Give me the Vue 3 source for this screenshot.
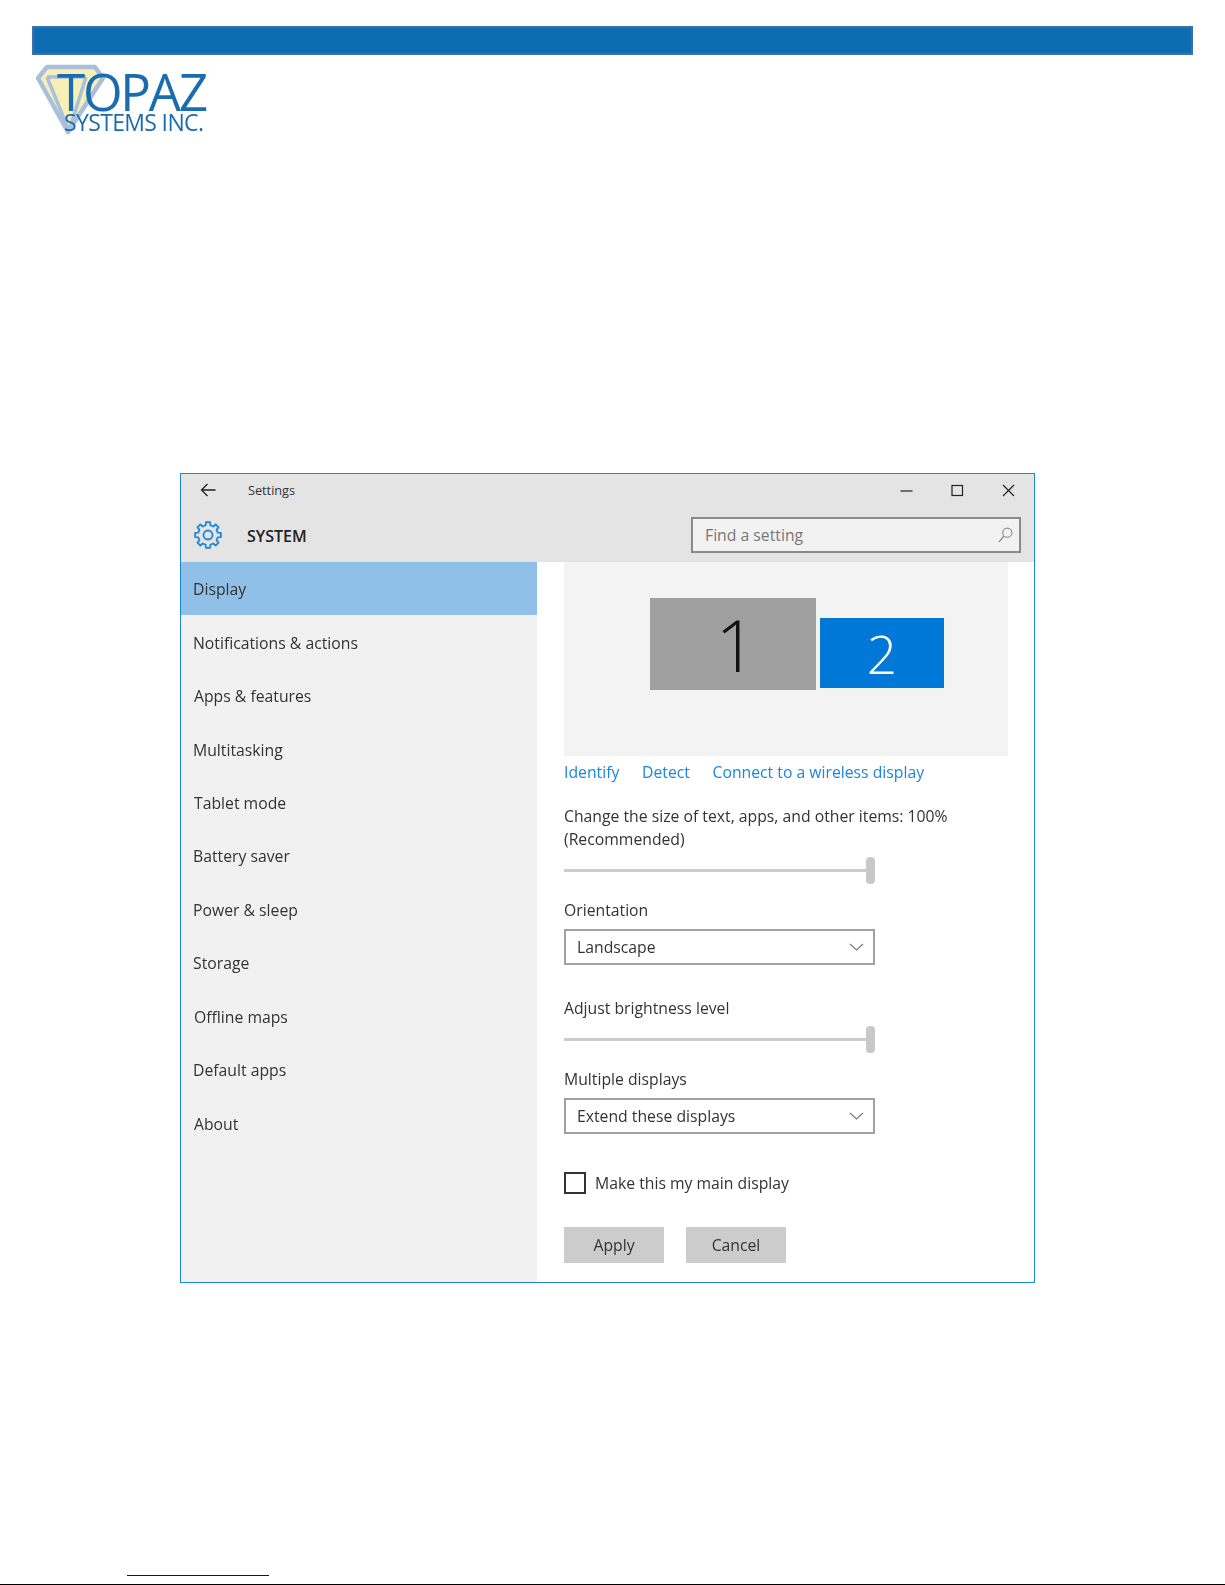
<script setup>
const navItems = [
  { label: 'Display', active: true },
  { label: 'Notifications & actions' },
  { label: 'Apps & features', inset: true },
  { label: 'Multitasking' },
  { label: 'Tablet mode', inset: true },
  { label: 'Battery saver' },
  { label: 'Power & sleep' },
  { label: 'Storage' },
  { label: 'Offline maps', inset: true },
  { label: 'Default apps' },
  { label: 'About', inset: true }
]

function gearPath(cx, cy, outer, inner, teeth) {
  const pts = []
  const step = (Math.PI * 2) / teeth
  for (let i = 0; i < teeth; i++) {
    const a = i * step - Math.PI / 2
    const w = step * 0.2
    const w2 = step * 0.3
    const p = (r, t) => `${(cx + r * Math.cos(t)).toFixed(2)} ${(cy + r * Math.sin(t)).toFixed(2)}`
    pts.push(p(inner, a - w2), p(outer, a - w), p(outer, a + w), p(inner, a + w2))
  }
  return 'M' + pts.join('L') + 'Z'
}
const gear = gearPath(14, 14, 13, 10, 8)
</script>

<template>
  <div class="page">
    <div class="topbar"></div>

    <div class="logo">
      <svg class="gem" width="72" height="72" viewBox="0 0 72 72">
        <path d="M11 3H59L67 14L32 68L2 14Z" fill="#f8efb8" stroke="#a9c0dd" stroke-width="4.5" stroke-linejoin="round" />
        <path d="M11 13H50M11 13L33 67M50 13L33 67" fill="none" stroke="#a9c0dd" stroke-width="3.5" />
      </svg>
      <div class="logo-name">TOPAZ</div>
      <div class="logo-sub">SYSTEMS INC.</div>
    </div>

    <section class="window">
      <header class="win-head">
        <div class="title-row">
          <svg class="back" width="16" height="14" viewBox="0 0 16 14">
            <path d="M15.5 7H1.5M7.5 1L1.5 7L7.5 13" fill="none" stroke="#222" stroke-width="1.3" />
          </svg>
          <span class="title">Settings</span>
          <div class="controls">
            <svg width="13" height="13" viewBox="0 0 13 13"><path d="M0.5 7H12.5" stroke="#222" stroke-width="1.2" /></svg>
            <svg width="13" height="13" viewBox="0 0 13 13"><rect x="1" y="1.5" width="10.5" height="10" fill="none" stroke="#222" stroke-width="1.2" /></svg>
            <svg width="13" height="13" viewBox="0 0 13 13"><path d="M1 1L12 12M12 1L1 12" stroke="#222" stroke-width="1.2" /></svg>
          </div>
        </div>
        <div class="system-row">
          <svg class="gear" width="28" height="28" viewBox="0 0 28 28">
            <path :d="gear" fill="none" stroke="#1a86d8" stroke-width="1.8" stroke-linejoin="round" />
            <circle cx="14" cy="14" r="4.5" fill="none" stroke="#1a86d8" stroke-width="1.8" />
          </svg>
          <span class="system">SYSTEM</span>
          <div class="search">
            <span>Find a setting</span>
            <svg width="15" height="16" viewBox="0 0 15 16">
              <circle cx="9.3" cy="5.7" r="4.6" fill="none" stroke="#8c8c8c" stroke-width="1.1" />
              <path d="M6 9L1 15" stroke="#8c8c8c" stroke-width="1.2" />
            </svg>
          </div>
        </div>
      </header>

      <div class="win-body">
        <nav class="sidebar">
          <div v-for="item in navItems" :key="item.label" class="nav-item" :class="{ active: item.active, inset: item.inset }">{{ item.label }}</div>
        </nav>

        <main class="content">
          <div class="preview">
            <div class="monitor one">1</div>
            <div class="monitor two">2</div>
          </div>

          <div class="links">
            <span>Identify</span>
            <span>Detect</span>
            <span>Connect to a wireless display</span>
          </div>

          <p class="size-text">Change the size of text, apps, and other items: 100%<br />(Recommended)</p>
          <div class="slider"><i></i></div>

          <div class="label orientation">Orientation</div>
          <div class="select">
            <span>Landscape</span>
            <svg width="15" height="8" viewBox="0 0 15 8"><path d="M1 1L7.5 7L14 1" fill="none" stroke="#777" stroke-width="1.1" /></svg>
          </div>

          <div class="label brightness">Adjust brightness level</div>
          <div class="slider"><i></i></div>

          <div class="label orientation">Multiple displays</div>
          <div class="select">
            <span>Extend these displays</span>
            <svg width="15" height="8" viewBox="0 0 15 8"><path d="M1 1L7.5 7L14 1" fill="none" stroke="#777" stroke-width="1.1" /></svg>
          </div>

          <div class="check-row">
            <span class="box"></span>
            <span>Make this my main display</span>
          </div>

          <div class="buttons">
            <button type="button">Apply</button>
            <button type="button">Cancel</button>
          </div>
        </main>
      </div>
    </section>

    <footer class="foot">
      <div class="foot-link"></div>
      <div class="foot-rule"></div>
    </footer>
  </div>
</template>

<style scoped>
.page {
  position: relative;
  height: 1585px;
  overflow: hidden;
  background: #fff;
  display: flex;
  flex-direction: column;
  font-family: "Open Sans", "Liberation Sans", sans-serif;
  color: #333;
}
.topbar {
  margin: 26px 32px 0;
  height: 29px;
  box-sizing: border-box;
  background: #0e6cb3;
  border: 2px solid #3f70a3;
}
.logo {
  position: relative;
  height: 418px;
  margin-left: 34px;
  flex: none;
  filter: blur(0.4px);
}
.gem {
  position: absolute;
  left: 2px;
  top: 9px;
}
.logo-name {
  position: absolute;
  left: 23px;
  top: 17px;
  font-size: 51px;
  line-height: 38px;
  letter-spacing: -2.2px;
  color: #1a6cae;
}
.logo-sub {
  position: absolute;
  left: 30px;
  top: 57px;
  font-size: 23px;
  line-height: 20px;
  letter-spacing: -0.65px;
  color: #1a6cae;
  white-space: nowrap;
}
.window {
  margin-left: 180px;
  width: 855px;
  height: 810px;
  flex: none;
  box-sizing: border-box;
  border: 1px solid #1a86e0;
  display: flex;
  flex-direction: column;
  font-size: 15.75px;
  filter: blur(0.3px);
}
.win-head {
  height: 88px;
  flex: none;
  background: #e4e4e4;
}
.title-row {
  height: 32px;
  margin-bottom: 2px;
  display: flex;
  align-items: center;
}
.back {
  margin-left: 19px;
  flex: none;
}
.title {
  margin-left: 32px;
  font-size: 12.7px;
}
.controls {
  margin-left: auto;
  margin-right: 19px;
  display: flex;
  gap: 38px;
}
.system-row {
  height: 54px;
  display: flex;
  align-items: center;
}
.gear {
  margin-left: 13px;
  flex: none;
}
.system {
  margin-left: 25px;
  margin-top: 2px;
  font-size: 16px;
  font-weight: 600;
  color: #222;
}
.search {
  margin-left: auto;
  margin-right: 13px;
  margin-top: -1px;
  width: 330px;
  height: 36px;
  box-sizing: border-box;
  border: 2px solid #8a8a8a;
  background: #f2f2f2;
  padding: 0 6px 0 12px;
  display: flex;
  align-items: center;
  justify-content: space-between;
  color: #777;
}
.win-body {
  flex: 1;
  display: flex;
  min-height: 0;
}
.sidebar {
  width: 356px;
  flex: none;
  background: #f1f1f1;
}
.nav-item {
  height: 53.45px;
  box-sizing: border-box;
  display: flex;
  align-items: center;
  padding: 1px 0 0 12px;
}
.nav-item.inset {
  padding-left: 13px;
}
.nav-item.active {
  background: #90c0e8;
}
.content {
  flex: 1;
  padding-left: 27px;
}
.preview {
  width: 444px;
  height: 194px;
  background: #f3f3f3;
  display: flex;
  align-items: flex-start;
  padding: 36px 0 0 86px;
  box-sizing: border-box;
  gap: 4px;
}
.monitor {
  display: flex;
  align-items: center;
  justify-content: center;
  font-weight: 300;
}
.monitor.one {
  width: 166px;
  height: 92px;
  box-sizing: border-box;
  padding-left: 6px;
  background: #a0a0a0;
  color: #111;
  font-size: 72px;
}
.monitor.two {
  width: 124px;
  height: 70px;
  margin-top: 20px;
  background: #0078d7;
  color: #fff;
  font-size: 53px;
}
.links {
  margin-top: 5px;
  height: 22px;
  line-height: 22px;
  display: flex;
  color: #1a86e0;
}
.links span:nth-child(1) { width: 78px; }
.links span:nth-child(2) { width: 70.5px; }
.size-text {
  margin: 22px 0 0;
  line-height: 22.5px;
}
.slider {
  position: relative;
  width: 311px;
  height: 27px;
  margin-top: 7px;
}
.slider::before {
  content: "";
  position: absolute;
  left: 0;
  right: 0;
  top: 12px;
  height: 2.5px;
  background: #ccc;
}
.slider i {
  position: absolute;
  right: 0;
  top: 0;
  width: 9px;
  height: 27px;
  border-radius: 4px;
  background: #c8c8c8;
}
.label {
  height: 22px;
  line-height: 22px;
}
.label.orientation { margin-top: 15px; }
.label.brightness { margin-top: 32px; }
.select {
  margin-top: 8px;
  width: 311px;
  height: 36px;
  box-sizing: border-box;
  border: 2px solid #a0a0a0;
  padding: 0 9px 0 11px;
  display: flex;
  align-items: center;
  justify-content: space-between;
}
.check-row {
  margin-top: 38px;
  height: 22px;
  display: flex;
  align-items: center;
  gap: 9px;
}
.box {
  width: 22px;
  height: 22px;
  box-sizing: border-box;
  border: 2px solid #333;
  flex: none;
}
.buttons {
  margin-top: 33px;
  display: flex;
  gap: 22px;
}
.buttons button {
  width: 100px;
  height: 36px;
  border: 0;
  padding: 0;
  background: #ccc;
  color: #333;
  font: inherit;
}
.foot {
  flex: 1;
  display: flex;
  flex-direction: column;
  justify-content: flex-end;
}
.foot-link {
  margin: 0 0 8px 127px;
  width: 142px;
  height: 1px;
  background: #0000cc;
}
.foot-rule {
  height: 1px;
  background: #000;
}
</style>
